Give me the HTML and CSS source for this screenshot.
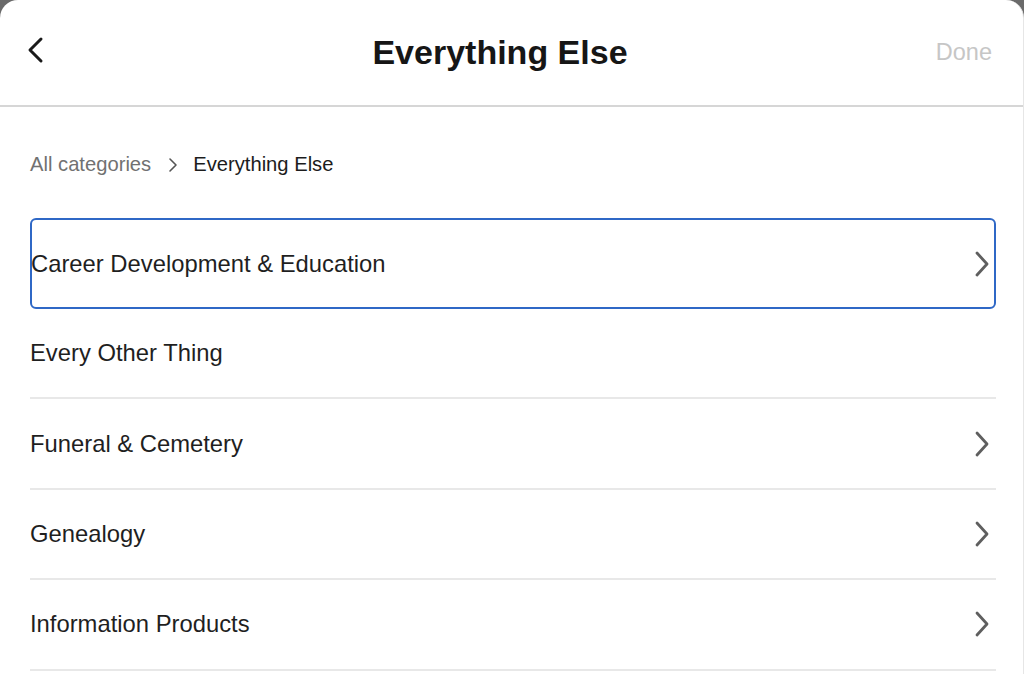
FILE: index.html
```html
<!DOCTYPE html>
<html>
<head>
<meta charset="utf-8">
<link rel="stylesheet" href="styles.css">
</head>
<body>
<div class="panel">
  <header class="topbar">
    <button class="back" aria-label="Back">
      <svg width="20" height="28" viewBox="0 0 20 28"><path d="M15 3 L4 14 L15 25" fill="none" stroke="#1a1a1a" stroke-width="3" stroke-linecap="round" stroke-linejoin="round"/></svg>
    </button>
    <h1 class="title">Everything Else</h1>
    <span class="done">Done</span>
  </header>
  <main class="content">
    <nav class="crumbs">
      <span class="crumb-link">All categories</span>
      <svg class="crumb-sep" width="12" height="16" viewBox="0 0 12 16"><path d="M3 2 L9 8 L3 14" fill="none" stroke="#555" stroke-width="1.6" stroke-linecap="round" stroke-linejoin="round"/></svg>
      <span class="crumb-current">Everything Else</span>
    </nav>
    <ul class="list">
      <li class="row focused"><span>Career Development &amp; Education</span>
        <svg class="chev" width="18" height="26" viewBox="0 0 18 26"><path d="M4 2 L14 13 L4 24" fill="none" stroke="#5f5f5f" stroke-width="2.8" stroke-linecap="round" stroke-linejoin="round"/></svg></li>
      <li class="row plain"><span>Every Other Thing</span></li>
      <li class="row"><span>Funeral &amp; Cemetery</span>
        <svg class="chev" width="18" height="26" viewBox="0 0 18 26"><path d="M4 2 L14 13 L4 24" fill="none" stroke="#5f5f5f" stroke-width="2.8" stroke-linecap="round" stroke-linejoin="round"/></svg></li>
      <li class="row"><span>Genealogy</span>
        <svg class="chev" width="18" height="26" viewBox="0 0 18 26"><path d="M4 2 L14 13 L4 24" fill="none" stroke="#5f5f5f" stroke-width="2.8" stroke-linecap="round" stroke-linejoin="round"/></svg></li>
      <li class="row"><span>Information Products</span>
        <svg class="chev" width="18" height="26" viewBox="0 0 18 26"><path d="M4 2 L14 13 L4 24" fill="none" stroke="#5f5f5f" stroke-width="2.8" stroke-linecap="round" stroke-linejoin="round"/></svg></li>
    </ul>
  </main>
</div>
</body>
</html>
```
FILE: styles.css
```css
html, body {
  margin: 0;
  padding: 0;
  height: 100%;
  background: #6a6a6a;
  overflow: hidden;
}
body {
  font-family: "Liberation Sans", Arial, sans-serif;
  color: #1f1f1f;
}
.panel {
  background: #fff;
  height: 100%;
  border-radius: 18px 18px 0 0;
  border-right: 1px solid #e6e6e6;
  box-sizing: border-box;
}
.topbar {
  height: 107px;
  box-sizing: border-box;
  border-bottom: 2px solid #d6d6d6;
  display: grid;
  grid-template-columns: 1fr auto 1fr;
  align-items: center;
  padding: 0 31px 0 26px;
}
.back {
  background: none;
  border: 0;
  padding: 0;
  justify-self: start;
  display: flex;
  align-items: center;
  cursor: pointer;
  margin-top: -5px;
}
.title {
  margin: 0 18px 0 0;
  font-size: 34px;
  font-weight: bold;
  color: #161616;
}
.done {
  justify-self: end;
  font-size: 23.5px;
  color: #c6c6c6;
}
.content {
  padding: 0 27px 0 30px;
}
.crumbs {
  display: flex;
  align-items: center;
  height: 111px;
  padding-top: 4px;
  box-sizing: border-box;
  font-size: 20.2px;
}
.crumb-link { color: #717171; }
.crumb-sep { margin: 0 14px 0 16px; }
.crumb-current { color: #1c1c1c; }
.list {
  list-style: none;
  margin: 0;
  padding: 0;
}
.row {
  height: 90.4px;
  box-sizing: border-box;
  display: flex;
  align-items: center;
  justify-content: space-between;
  font-size: 23.8px;
  border-bottom: 2px solid #e8e8e8;
  padding-right: 5px;
}
.row.focused {
  height: 91px;
  border: 2.5px solid #2f68c6;
  border-radius: 6px;
  padding-right: 3px;
}
.row.focused span { margin-left: -1px; }
.chev { display: block; }
```
